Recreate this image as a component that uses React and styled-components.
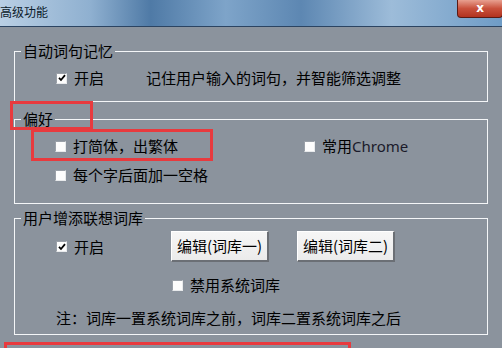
import React from 'react';
import styled, { createGlobalStyle } from 'styled-components';

const GlobalStyle = createGlobalStyle`
html, body {
    margin: 0;
    padding: 0;
    background: #8b939d;
    overflow: hidden;
}
`

const Window = styled.div`
position: relative;
width: 502px;
height: 348px;
overflow: hidden;
background: #8b939d;
font-family: "Noto Sans CJK SC", "Noto Sans", sans-serif;
color: #000;
`

const TitleBar = styled.div`
height: 26px;
display: flex;
align-items: center;
justify-content: space-between;
border-bottom: 1px solid #2b4462;
background: linear-gradient(90deg, #b9cfe4 0%, #8fb0d0 18%, #4f7aa6 30%, #7ea4c9 45%, #5d87b2 60%, #9dbcd9 78%, #6f9cc6 100%);
`

const Title = styled.span`
font-size: 12px;
line-height: 14px;
margin-top: -2px;
color: #0b1a2a;
`

const CloseButton = styled.div`
align-self: flex-start;
width: 44px;
height: 17px;
margin-right: -1px;
border: 1px solid #5a1a14;
border-top: none;
border-radius: 0 0 4px 4px;
background: linear-gradient(180deg, #e8a090 0%, #c9513c 50%, #b2321f 100%);
color: #fff;
font-family: "DejaVu Sans", sans-serif;
font-weight: bold;
font-size: 12px;
line-height: 16px;
text-align: center;
`

const Body = styled.div`
display: flex;
flex-direction: column;
padding: 16px 14px 0 14px;
`

const Group = styled.fieldset`
margin: ${({ $gap }) => $gap}px 0 0 0;
padding: 0;
border: 1px solid #f4f6f8;
min-width: 0;
`

const Legend = styled.legend`
margin-left: 6px;
padding: 0 2px;
font-size: 15px;
line-height: 16px;
`

const Inner = styled.div`
display: flex;
flex-direction: column;
gap: ${({ $gap }) => $gap}px;
padding: ${({ $pad }) => $pad};
`

const Row = styled.div`
display: flex;
align-items: center;
height: ${({ $h }) => $h || 20}px;
padding-left: ${({ $indent }) => $indent || 0}px;
`

const CheckItem = styled.label`
display: flex;
align-items: center;
gap: 7px;
font-size: 15px;
line-height: 20px;
width: ${({ $w }) => ($w ? `${$w}px` : 'auto')};
white-space: nowrap;
`

const Box = styled.span`
width: 9px;
height: 9px;
background: #fdfdfd;
border-top: 1px solid #9aa0a8;
border-left: 1px solid #9aa0a8;
border-right: 1px solid #e8eaec;
border-bottom: 1px solid #e8eaec;
display: flex;
align-items: center;
justify-content: center;
flex-shrink: 0;
`

const Text = styled.span`
font-size: 15px;
line-height: 20px;
white-space: nowrap;
`

const Latin = styled.span`
font-family: "Noto Sans", sans-serif;
font-size: 15px;
color: #1a1a2a;
`

const Button = styled.button`
width: 98px;
height: 31px;
padding: 0;
margin-right: ${({ $mr }) => $mr || 0}px;
font-family: "Noto Sans CJK SC", "Noto Sans", sans-serif;
font-size: 15px;
line-height: 18px;
color: #000;
background: linear-gradient(180deg, #f6f6f6 0%, #ebebeb 100%);
border-top: 1px solid #ffffff;
border-left: 1px solid #ffffff;
border-right: 2px solid #6b6f75;
border-bottom: 2px solid #6b6f75;
`

const Highlight = styled.div`
position: absolute;
border: 3px solid #e83a3e;
`

const Check = ({ checked }) => (
    <Box>
        {checked && (
            <svg width="8" height="8" viewBox="0 0 8 8">
                <path d="M1 3.8 L3 6 L7 1.2" fill="none" stroke="#000" strokeWidth="1.8" />
            </svg>
        )}
    </Box>
)

export default function App() {
    return (
        <Window>
            <GlobalStyle />
            <TitleBar>
                <Title>高级功能</Title>
                <CloseButton>x</CloseButton>
            </TitleBar>
            <Body>
                <Group $gap={0}>
                    <Legend>自动词句记忆</Legend>
                    <Inner $gap={0} $pad="9px 0 13px 41px">
                        <Row>
                            <CheckItem $w={90}><Check checked /><span>开启</span></CheckItem>
                            <Text>记住用户输入的词句，并智能筛选调整</Text>
                        </Row>
                    </Inner>
                </Group>

                <Group $gap={9}>
                    <Legend>偏好</Legend>
                    <Inner $gap={9} $pad="9px 0 18px 40px">
                        <Row>
                            <CheckItem $w={249}><Check /><span>打简体，出繁体</span></CheckItem>
                            <CheckItem><Check /><span>常用<Latin>Chrome</Latin></span></CheckItem>
                        </Row>
                        <Row>
                            <CheckItem><Check /><span>每个字后面加一空格</span></CheckItem>
                        </Row>
                    </Inner>
                </Group>

                <Group $gap={6}>
                    <Legend>用户增添联想词库</Legend>
                    <Inner $gap={13} $pad="5px 0 6px 41px">
                        <Row $h={31}>
                            <CheckItem $w={115}><Check checked /><span>开启</span></CheckItem>
                            <Button $mr={28}>编辑(词库一)</Button>
                            <Button>编辑(词库二)</Button>
                        </Row>
                        <Row $indent={116}>
                            <CheckItem><Check /><span>禁用系统词库</span></CheckItem>
                        </Row>
                        <Row>
                            <Text>注：词库一置系统词库之前，词库二置系统词库之后</Text>
                        </Row>
                    </Inner>
                </Group>
            </Body>

            <Highlight style={{ left: 10, top: 101, width: 77, height: 23 }} />
            <Highlight style={{ left: 31, top: 129, width: 176, height: 26 }} />
            <Highlight style={{ left: 4, top: 342, width: 341, height: 30 }} />
        </Window>
    )
}
